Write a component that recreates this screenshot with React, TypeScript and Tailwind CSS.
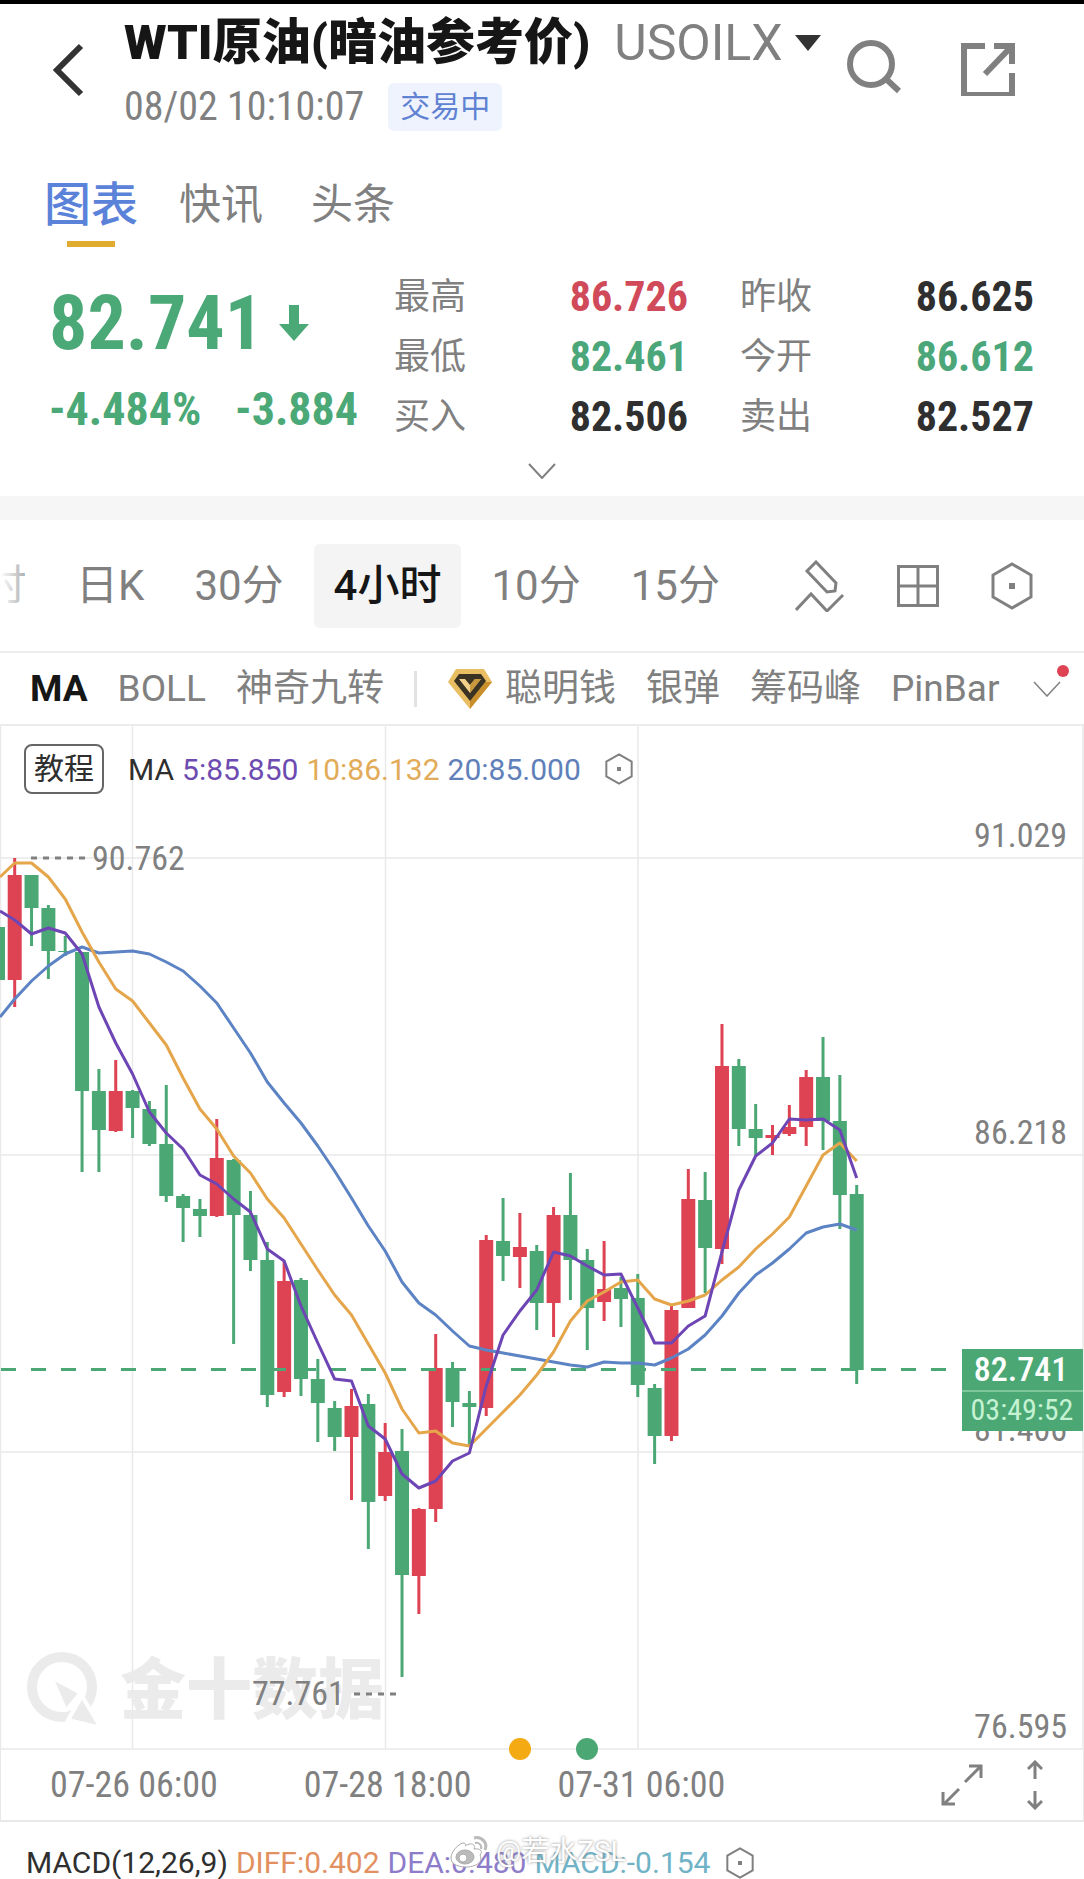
import { useState } from "react";

type Candle = [up: 0 | 1, high: number, low: number, top: number, bottom: number];

const RED = "#de4354";
const GREEN = "#4ba875";

// Chart geometry
const CHART_W = 1084;
const CHART_H = 1024;
const TOP = 726;
const FIRST_X = 14.7;
const STEP = 16.84;

const candles: Candle[] = [
  [1, 858, 1007, 875, 980],
  [0, 875, 946, 875, 908],
  [0, 905, 979, 908, 951],
  [0, 936, 956, 951, 952],
  [0, 952, 1172, 952, 1091],
  [0, 1069, 1172, 1091, 1130],
  [1, 1060, 1132, 1091, 1131],
  [0, 1090, 1138, 1091, 1108],
  [0, 1101, 1146, 1109, 1144],
  [0, 1085, 1202, 1144, 1196],
  [0, 1194, 1242, 1196, 1208],
  [0, 1199, 1237, 1209, 1216],
  [1, 1119, 1217, 1158, 1216],
  [0, 1159, 1344, 1160, 1215],
  [0, 1191, 1271, 1215, 1260],
  [0, 1242, 1407, 1260, 1395],
  [1, 1262, 1397, 1281, 1392],
  [0, 1278, 1396, 1280, 1379],
  [0, 1359, 1442, 1379, 1403],
  [0, 1401, 1451, 1408, 1437],
  [1, 1389, 1500, 1406, 1437],
  [0, 1394, 1549, 1404, 1502],
  [1, 1423, 1501, 1452, 1496],
  [0, 1429, 1677, 1451, 1575],
  [1, 1508, 1614, 1509, 1576],
  [1, 1334, 1522, 1368, 1509],
  [0, 1362, 1427, 1368, 1402],
  [0, 1391, 1447, 1403, 1407],
  [1, 1235, 1416, 1240, 1408],
  [0, 1198, 1281, 1241, 1256],
  [1, 1213, 1288, 1247, 1257],
  [0, 1245, 1330, 1251, 1303],
  [1, 1207, 1337, 1215, 1303],
  [0, 1173, 1300, 1215, 1260],
  [0, 1249, 1350, 1260, 1308],
  [1, 1241, 1321, 1289, 1302],
  [0, 1277, 1327, 1288, 1299],
  [0, 1274, 1397, 1298, 1385],
  [0, 1384, 1464, 1388, 1436],
  [1, 1306, 1441, 1310, 1436],
  [1, 1169, 1308, 1199, 1308],
  [0, 1172, 1293, 1200, 1248],
  [1, 1024, 1264, 1066, 1249],
  [0, 1059, 1146, 1066, 1129],
  [0, 1104, 1155, 1129, 1138],
  [1, 1125, 1155, 1135, 1138],
  [1, 1105, 1136, 1127, 1134],
  [1, 1070, 1146, 1077, 1127],
  [0, 1037, 1150, 1077, 1121],
  [0, 1075, 1229, 1121, 1195],
  [0, 1185, 1384, 1194, 1370],
];

const ma5 = [
  920, 934, 928, 933, 954, 1007, 1043, 1074, 1112, 1133, 1149, 1175, 1184, 1199, 1212, 1249, 1261,
  1306, 1343, 1379, 1381, 1426, 1439, 1474, 1488, 1481, 1461, 1453, 1386, 1335, 1311, 1290, 1252,
  1256, 1266, 1275, 1274, 1308, 1343, 1343, 1326, 1316, 1252, 1190, 1156, 1143, 1119, 1120, 1119,
  1130, 1178,
];

const ma10 = [
  863, 863, 877, 899, 932, 962, 989, 1001, 1023, 1045, 1078, 1109, 1129, 1156, 1173, 1199, 1218,
  1244, 1270, 1295, 1315, 1344, 1373, 1409, 1433, 1431, 1443, 1446, 1429, 1412, 1395, 1375, 1352,
  1321, 1301, 1292, 1282, 1280, 1299, 1305, 1301, 1295, 1280, 1267, 1249, 1234, 1217, 1186, 1155,
  1143, 1161,
];

const ma20 = [
  999, 981, 966, 954, 947, 953, 952, 951, 954, 962, 971, 986, 1003, 1028, 1053, 1082, 1103, 1123,
  1146, 1171, 1198, 1226, 1251, 1282, 1303, 1315, 1331, 1346, 1350, 1353, 1356, 1359, 1362, 1365,
  1367, 1362, 1363, 1363, 1365, 1358, 1349, 1335, 1316, 1293, 1275, 1263, 1249, 1233, 1227, 1224,
  1230,
];

const x = (i: number) => FIRST_X + i * STEP;

const linePoints = (start: number, values: number[]) =>
  [`0,${start - TOP}`, ...values.map((v, i) => `${x(i)},${v - TOP}`)].join(" ");

const quotes = [
  { label: "最高", value: "86.726", color: "text-[#d04a5a]" },
  { label: "昨收", value: "86.625", color: "text-[#2f2f2f]" },
  { label: "最低", value: "82.461", color: "text-[#4ba77a]" },
  { label: "今开", value: "86.612", color: "text-[#4ba77a]" },
  { label: "买入", value: "82.506", color: "text-[#2f2f2f]" },
  { label: "卖出", value: "82.527", color: "text-[#2f2f2f]" },
];

const periods = ["日K", "30分", "4小时", "10分", "15分"];

function Hexagon({ className, stroke = 2 }: { className: string; stroke?: number }) {
  return (
    <svg viewBox="0 0 42 48" className={className} fill="none" stroke="#808080" strokeWidth={stroke}>
      <path d="M21 2 L40 13 V35 L21 46 L2 35 V13 Z" />
      <rect x="18" y="21" width="6" height="6" fill="#808080" stroke="none" />
    </svg>
  );
}

function Header() {
  return (
    <header className="flex items-start border-t-4 border-black pl-[52px] pr-[69px]">
      <button type="button" aria-label="返回" className="mt-[39px] shrink-0">
        <svg viewBox="0 0 32 54" className="h-[54px] w-8" fill="none" stroke="#333" strokeWidth="6">
          <path d="M29 3 L5 27 L29 51" />
        </svg>
      </button>
      <div className="ml-10 mt-[11px] min-w-0 flex-1">
        <h1 className="flex items-center whitespace-nowrap text-[49px] leading-[56px] text-[#161616]">
          <span className="font-black">WTI原油(暗油参考价)</span>
          <span className="ml-6 text-[50px] font-normal text-[#808080]">USOILX</span>
          <svg viewBox="0 0 26 16" className="ml-3 h-4 w-[26px]">
            <path d="M0 0 H26 L13 16 Z" fill="#333" />
          </svg>
        </h1>
        <div className="mt-3 flex items-center">
          <time className="font-['Liberation_Sans_Narrow','Roboto_Condensed',Roboto,sans-serif] text-[40px] leading-[48px] text-[#808080]">
            08/02 10:10:07
          </time>
          <span className="ml-6 rounded-md bg-[#eff3fd] px-3 text-[30px] leading-[48px] text-[#5f82d3]">
            交易中
          </span>
        </div>
      </div>
      <div className="mt-9 flex shrink-0 gap-[60px]">
        <button type="button" aria-label="搜索">
          <svg viewBox="0 0 54 56" className="h-14 w-[54px]" fill="none" stroke="#808080" strokeWidth="6">
            <circle cx="24" cy="24" r="21" />
            <path d="M38 38 L52 51" />
          </svg>
        </button>
        <button type="button" aria-label="分享">
          <svg viewBox="0 0 54 56" className="h-14 w-[54px]" fill="none" stroke="#808080" strokeWidth="6">
            <path d="M24 6 H3 V55 H51 V33" />
            <path d="M33 6 H51 V24" />
            <path d="M50 7 L24 34" />
          </svg>
        </button>
      </div>
    </header>
  );
}

function Tabs() {
  return (
    <nav className="mt-[43px] flex items-center pl-11 text-[42px] leading-[62px] text-[#808080]">
      <a href="#chart" className="relative text-[47px] font-medium text-[#5b82d9]">
        图表
        <span className="absolute -bottom-[11px] left-1/2 h-[6px] w-12 -translate-x-1/2 bg-[#e0ac2f]" />
      </a>
      <a href="#news" className="ml-[41px]">
        快讯
      </a>
      <a href="#headlines" className="ml-12">
        头条
      </a>
    </nav>
  );
}

function QuotePanel() {
  return (
    <section className="mt-[31px] pb-[17px]">
      <div className="flex pl-[49px] pr-[50px]">
        <div className="w-[345px] shrink-0 font-['Liberation_Sans_Narrow','Roboto_Condensed',Roboto,sans-serif] font-bold text-[#4ba877]">
          <div className="mt-3 flex items-center text-[76px] leading-[88px]">
            82.741
            <svg viewBox="0 0 30 36" className="ml-4 h-9 w-[30px]">
              <path d="M10 0 H20 V19 H30 L15 36 L0 19 H10 Z" fill="currentColor" />
            </svg>
          </div>
          <div className="mt-3 flex justify-between pr-9 text-[46px] leading-[60px]">
            <span>-4.484%</span>
            <span>-3.884</span>
          </div>
        </div>
        <dl className="grid flex-1 grid-cols-2 gap-x-[52px]">
          {quotes.map((q) => (
            <div key={q.label} className="flex items-center justify-between leading-[60px]">
              <dt className="text-[36px] text-[#808080]">{q.label}</dt>
              <dd
                className={`font-['Liberation_Sans_Narrow','Roboto_Condensed',Roboto,sans-serif] text-[42px] font-bold ${q.color}`}
              >
                {q.value}
              </dd>
            </div>
          ))}
        </dl>
      </div>
      <button type="button" aria-label="展开" className="mx-auto mt-4 block">
        <svg viewBox="0 0 28 16" className="h-4 w-7" fill="none" stroke="#808080" strokeWidth="2">
          <path d="M1 1 L14 15 L27 1" />
        </svg>
      </button>
    </section>
  );
}

function PeriodBar() {
  const [active, setActive] = useState("4小时");

  return (
    <div className="flex h-[133px] items-center overflow-hidden border-b-2 border-[#ececec] pr-[51px] text-[42px] text-[#808080]">
      <div className="relative flex min-w-0 flex-1 items-center gap-[10px] overflow-hidden">
        <button type="button" className="-ml-4 pr-5">
          时
        </button>
        <span className="absolute left-0 top-0 h-full w-6 bg-linear-to-r from-white to-white/40" />
        {periods.map((p) => (
          <button
            key={p}
            type="button"
            onClick={() => setActive(p)}
            className={
              p === active
                ? "rounded-md bg-[#f4f4f4] px-5 leading-[84px] font-medium whitespace-nowrap text-[#161616]"
                : "px-5 leading-[84px] whitespace-nowrap"
            }
          >
            {p}
          </button>
        ))}
      </div>
      <div className="flex shrink-0 items-center gap-[52px]">
        <button type="button" aria-label="画线">
          <svg viewBox="0 0 50 52" className="h-[52px] w-[50px]" fill="none" stroke="#808080" strokeWidth="3">
            <path d="M12 11 L21 2 L41 23 L40 31 L32 32 Z" />
            <path d="M1 50 L16 34 L32 51 L48 35" />
          </svg>
        </button>
        <button type="button" aria-label="分屏">
          <svg viewBox="0 0 42 42" className="h-[42px] w-[42px]" fill="none" stroke="#808080" strokeWidth="3">
            <rect x="1.5" y="1.5" width="39" height="39" />
            <path d="M21 2 V40 M2 21 H40" />
          </svg>
        </button>
        <button type="button" aria-label="设置">
          <Hexagon className="h-12 w-[42px]" stroke={3} />
        </button>
      </div>
    </div>
  );
}

function IndicatorBar() {
  return (
    <div className="flex h-[73px] items-center gap-[30px] border-b-2 border-[#ececec] pl-[30px] pr-4 text-[37px] whitespace-nowrap text-[#808080]">
      <button type="button" className="font-bold text-[#161616]">
        MA
      </button>
      <button type="button">BOLL</button>
      <button type="button">神奇九转</button>
      <span className="h-9 w-[3px] bg-[#e2e2e2]" />
      <button type="button" className="flex items-center gap-3">
        <svg viewBox="0 0 46 42" className="h-[42px] w-[46px]">
          <path d="M9 1 H37 L45 14 L23 41 L1 14 Z" fill="#e9bd62" />
          <path d="M23 41 L45 14 L38 14 L23 32 Z" fill="#c98f2d" />
          <path d="M12 6 H34 L39 13 L23 33 L7 13 Z" fill="#3a3222" />
          <path d="M12 11 L23 25 L34 11 H28 L23 17 L18 11 Z" fill="#f0d08a" />
          <path d="M23 25 L34 11 H28 L23 17 Z" fill="#c9973c" />
        </svg>
        聪明钱
      </button>
      <button type="button">银弹</button>
      <button type="button">筹码峰</button>
      <button type="button">PinBar</button>
      <button type="button" aria-label="更多指标" className="relative ml-1">
        <svg viewBox="0 0 28 16" className="h-4 w-7" fill="none" stroke="#808080" strokeWidth="1.5">
          <path d="M1 1 L14 15 L27 1" />
        </svg>
        <span className="absolute -right-2 -top-4 h-3 w-3 rounded-full bg-[#de4354]" />
      </button>
    </div>
  );
}

function Chart() {
  return (
    <section id="chart" className="relative">
      <svg
        viewBox={`0 0 ${CHART_W} ${CHART_H}`}
        className="block w-full overflow-visible font-['Liberation_Sans_Narrow','Roboto_Condensed',Roboto,sans-serif]"
      >
        {/* 水印 */}
        <g fill="#ebebeb">
          <circle cx="62" cy="961" r="30" fill="none" stroke="#ebebeb" strokeWidth="10" />
          <path d="M52 952 L80 967 L66 984 Z" stroke="#fff" strokeWidth="3" />
          <path d="M82 970 L101 1002 L68 994 Z" stroke="#fff" strokeWidth="4" />
          <text
            x="120"
            y="987"
            fontSize="66"
            fontWeight="900"
            className="font-['Noto_Sans_CJK_SC',sans-serif]"
          >
            金十数据
          </text>
        </g>

        {/* 网格 */}
        <g stroke="#e9e9e9" strokeWidth="1.5">
          <path d="M0 132 H1084 M0 429 H1084 M0 726 H1084 M0 1023 H1084" />
          <path d="M132.5 0 V1023 M385.5 0 V1023 M638 0 V1023" />
          <path d="M0.5 0 V1024 M1083 0 V1024" />
        </g>

        {/* 坐标 */}
        <g fontSize="34" fill="#808080" textAnchor="end">
          <text x="1067" y="121">91.029</text>
          <text x="1067" y="418">86.218</text>
          <text x="1067" y="715">81.406</text>
          <text x="1067" y="1012">76.595</text>
        </g>

        {/* K线 */}
        <rect x="0" y="201" width="5" height="53" fill={GREEN} />
        {candles.map(([up, high, low, top, bottom], i) => (
          <g key={i} fill={up ? RED : GREEN}>
            <rect x={x(i) - 1.5} y={high - TOP} width="3" height={low - high} />
            <rect x={x(i) - 7} y={top - TOP} width="14" height={bottom - top} />
          </g>
        ))}

        <path d="M1 643.5 H950" stroke={GREEN} strokeWidth="3" strokeDasharray="15 15" />

        <g fill="none" strokeWidth="3" strokeLinejoin="round">
          <polyline points={linePoints(1017, ma20)} stroke="#5c83c3" />
          <polyline points={linePoints(877, ma10)} stroke="#e5a64b" />
          <polyline points={linePoints(911, ma5)} stroke="#6d45b4" />
        </g>

        {/* 最高 / 最低 */}
        <g fontSize="34" fill="#808080">
          <text x="92" y="144">90.762</text>
          <text x="252" y="979">77.761</text>
        </g>
        <g stroke="#808080" strokeWidth="3" strokeDasharray="6 6">
          <path d="M31 132 H88" />
          <path d="M354 968 H397" />
        </g>

        {/* 当前价 */}
        <rect x="962" y="623" width="121" height="82" fill={GREEN} />
        <path d="M962 665 H1083" stroke="#8fd0aa" strokeWidth="1.5" />
        <g textAnchor="middle">
          <text x="1021" y="655" fontSize="34" fontWeight="500" fill="#fff">
            82.741
          </text>
          <text x="1022" y="694" fontSize="30" fill="#c4f2d3">
            03:49:52
          </text>
        </g>

        <circle cx="520" cy="1023" r="11" fill="#f3aa13" />
        <circle cx="587" cy="1023" r="11" fill={GREEN} />
      </svg>

      <div className="absolute left-6 top-[18px] flex items-center whitespace-nowrap text-[30px] text-[#2f2f2f]">
        <button type="button" className="rounded-lg border-2 border-[#666] px-2 leading-[46px]">
          教程
        </button>
        <span className="ml-6">MA</span>
        <span className="ml-2 text-[#6d4bb0]">5:85.850</span>
        <span className="ml-2 text-[#e2ab58]">10:86.132</span>
        <span className="ml-2 text-[#5f80b9]">20:85.000</span>
        <button type="button" aria-label="均线设置" className="ml-6">
          <Hexagon className="h-8 w-7" stroke={3} />
        </button>
      </div>
    </section>
  );
}

function TimeAxis() {
  return (
    <div className="flex h-[72px] items-center border-x border-b-2 border-[#e8e8e8] pl-[49px] pr-10 text-[#808080]">
      <div className="flex flex-1 gap-[86px] font-['Liberation_Sans_Narrow','Roboto_Condensed',Roboto,sans-serif] text-[36px] whitespace-nowrap">
        <span>07-26 06:00</span>
        <span>07-28 18:00</span>
        <span>07-31 06:00</span>
      </div>
      <div className="flex items-center gap-[44px]">
        <button type="button" aria-label="全屏">
          <svg viewBox="0 0 42 42" className="h-[42px] w-[42px]" fill="none" stroke="currentColor" strokeWidth="3">
            <path d="M24 18 L39 3 M28 2 H40 V14" />
            <path d="M18 25 L3 40 M2 28 V40 H14" />
          </svg>
        </button>
        <button type="button" aria-label="调整高度">
          <svg viewBox="0 0 16 50" className="h-[50px] w-4" fill="none" stroke="currentColor" strokeWidth="3">
            <path d="M8 19 V2 M1 9 L8 2 L15 9" />
            <path d="M8 31 V48 M1 41 L8 48 L15 41" />
          </svg>
        </button>
      </div>
    </div>
  );
}

function MacdBar() {
  return (
    <footer className="relative flex items-center overflow-hidden pl-[26px] pt-6 text-[30px] leading-[34px] whitespace-nowrap">
      <span className="text-[#2f2f2f]">MACD(12,26,9)</span>
      <span className="ml-2 text-[#e2905f]">DIFF:0.402</span>
      <span className="ml-2 text-[#8d7cc9]">DEA:0.480</span>
      <span className="ml-2 text-[#70b3c6]">MACD:-0.154</span>
      <button type="button" aria-label="MACD设置" className="ml-4">
        <Hexagon className="h-8 w-7" stroke={3} />
      </button>
      <div className="absolute left-[450px] top-3 flex items-center gap-2 text-[28px] leading-9 text-white [text-shadow:0_0_3px_#888]">
        <svg viewBox="0 0 38 32" className="h-8 w-[38px] overflow-visible" stroke="#aaa" strokeWidth="1">
          <path
            d="M15 10 C21 6 26 8 24 13 C31 12 33 16 30 19 C34 27 24 31 16 31 C6 31 1 27 1 22 C1 16 8 8 13 7 C16 7 16 9 15 10 Z"
            fill="#fff"
          />
          <ellipse cx="15" cy="21" rx="9" ry="7" fill="#bbb" />
          <circle cx="13" cy="22" r="4" fill="#fff" />
          <path d="M24 2 C32 0 38 7 35 14" fill="none" stroke="#bbb" strokeWidth="3" />
          <path d="M25 7 C29 6 32 9 31 13" fill="none" stroke="#bbb" strokeWidth="2" />
        </svg>
        @若水ZSL
      </div>
    </footer>
  );
}

export default function App() {
  return (
    <div className="w-full overflow-hidden bg-white font-[Roboto,'Noto_Sans_CJK_SC',sans-serif]">
      <Header />
      <Tabs />
      <QuotePanel />
      <div className="h-6 bg-[#f6f6f6]" />
      <PeriodBar />
      <IndicatorBar />
      <Chart />
      <TimeAxis />
      <MacdBar />
    </div>
  );
}
